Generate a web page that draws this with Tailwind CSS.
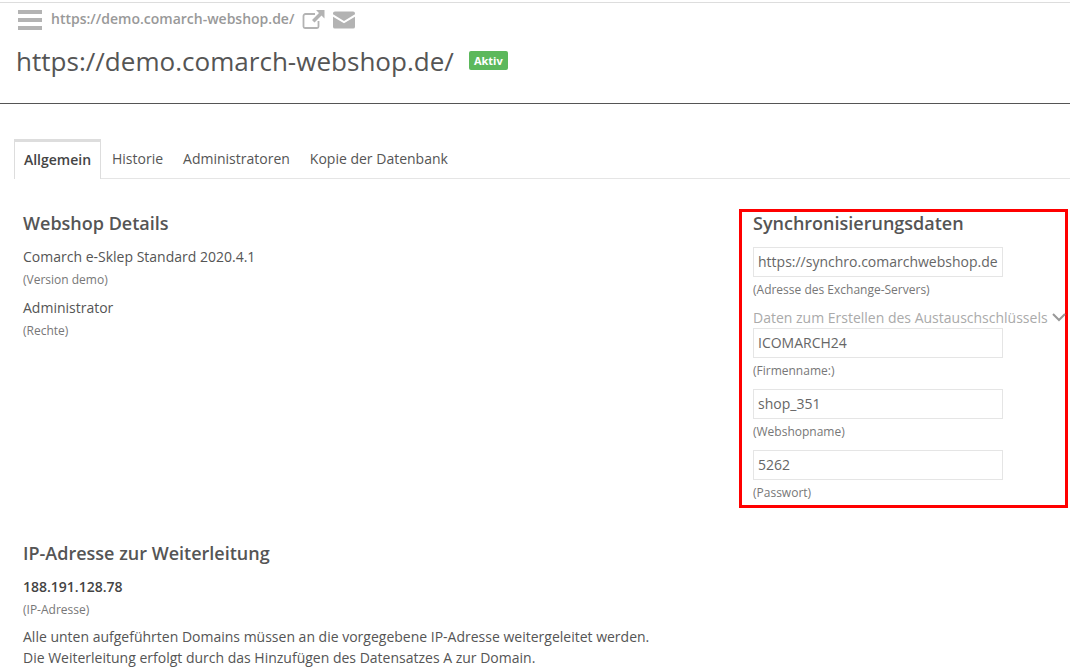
<!DOCTYPE html>
<html lang="de">
<head>
    <meta charset="UTF-8">
    <title>Webshop Details</title>
    <script src="https://cdn.jsdelivr.net/npm/@tailwindcss/browser@4"></script>
</head>
<body class="bg-white h-[671px] overflow-hidden font-['Open_Sans',sans-serif] text-[#555]">
<!-- Top bar -->
<header class="mt-[2px] border-t border-[#ddd] h-[101px] border-b-0">
    <div class="flex items-center h-[34px] pl-[18px]">
        <div class="flex flex-col gap-[4px] w-[24px]">
            <span class="h-[4px] bg-[#b3b3b3]"></span>
            <span class="h-[4px] bg-[#b3b3b3]"></span>
            <span class="h-[4px] bg-[#b3b3b3]"></span>
        </div>
        <a class="ml-[9px] mb-[3px] text-[14px] font-semibold text-[#999]">https://demo.comarch-webshop.de/</a>
        <svg class="ml-[8px] mb-[1px]" width="23" height="19" viewBox="0 0 23 19" fill="none">
            <path d="M13 4H3.500A2 2 0 0 0 1.500 6v10.500a1.500 1.500 0 0 0 1.500 1.500h12a1.500 1.500 0 0 0 1.500-1.500V11" stroke="#b3b3b3" stroke-width="1.800"/>
            <path d="M14 0h8.500v8.500l-3-3-7 7-2.500-2.500 7-7z" fill="#b3b3b3"/>
        </svg>
        <svg class="ml-[8px]" width="22" height="18" viewBox="0 0 23 18">
            <path d="M2 0h19a2 2 0 0 1 2 2v1L11.500 10 0 3V2a2 2 0 0 1 2-2z" fill="#b3b3b3"/>
            <path d="M0 5.500l11.500 7 11.500-7V16a2 2 0 0 1-2 2H2a2 2 0 0 1-2-2z" fill="#b3b3b3"/>
        </svg>
    </div>
    <div class="flex items-center pl-[16px] mt-[6px]">
        <h1 class="text-[26.06px] leading-[36px] text-[#555]">https://demo.comarch-webshop.de/</h1>
        <span class="ml-[15px] mb-[1px] bg-[#5cb85c] text-white text-[11px] leading-[19px] font-bold px-[5px] rounded-[2px]">Aktiv</span>
    </div>
</header>
<div class="h-px bg-[#555]"></div>

<!-- Tabs -->
<nav class="mt-[35px] ml-[14px] flex h-[40px] border-b border-[#e5e5e5] text-[14px]">
    <a class="w-[87px] h-[40px] pb-[3px] bg-white border-x border-[#ddd] border-t-[3px] border-t-[#ddd] flex items-center justify-center font-semibold text-[#444]">Allgemein</a>
    <a class="ml-[11px] h-[39px] flex items-center">Historie</a>
    <a class="ml-[20px] h-[39px] flex items-center">Administratoren</a>
    <a class="ml-[20px] h-[39px] flex items-center">Kopie der Datenbank</a>
</nav>

<main class="flex pl-[23px] mt-[30px]">
    <!-- Webshop Details -->
    <section class="w-[716px] pt-[1px]">
        <h2 class="text-[18px] leading-[26px] font-semibold">Webshop Details</h2>
        <p class="mt-[11px] text-[14px] leading-[20px]">Comarch e-Sklep Standard 2020.4.1</p>
        <p class="mt-[5px] text-[12px] leading-[16px] text-[#777]">(Version demo)</p>
        <p class="mt-[10px] text-[14px] leading-[20px]">Administrator</p>
        <p class="mt-[5px] text-[12px] leading-[16px] text-[#777]">(Rechte)</p>
    </section>

    <!-- Synchronisierungsdaten -->
    <section class="w-[329px] h-[299px] border-[3px] border-[#f00] pl-[11px]">
        <h2 class="-mt-[2px] text-[18px] leading-[26px] font-semibold">Synchronisierungsdaten</h2>
        <input class="block mt-[11px] w-[250px] h-[30px] border border-[#e5e5e5] px-[4px] pb-[2px] text-[14px] text-[#666]" value="https://synchro.comarchwebshop.de">
        <p class="mt-[5px] text-[12px] leading-[16px] text-[#777]">(Adresse des Exchange-Servers)</p>
        <div class="mt-[9px] h-[20px] flex items-center text-[14px] whitespace-nowrap text-[#aaa]">
            Daten zum Erstellen des Austauschschlüssels
            <svg class="ml-[4px] shrink-0" width="14" height="9" viewBox="0 0 14 9" fill="none"><path d="M1 1l6 6 6-6" stroke="#999" stroke-width="2"/></svg>
        </div>
        <input class="block mt-[1px] w-[250px] h-[30px] border border-[#e5e5e5] px-[4px] pb-[2px] text-[14px] text-[#666]" value="ICOMARCH24">
        <p class="mt-[5px] text-[12px] leading-[16px] text-[#777]">(Firmenname:)</p>
        <input class="block mt-[10px] w-[250px] h-[30px] border border-[#e5e5e5] px-[4px] pb-[2px] text-[14px] text-[#666]" value="shop_351">
        <p class="mt-[5px] text-[12px] leading-[16px] text-[#777]">(Webshopname)</p>
        <input class="block mt-[10px] w-[250px] h-[30px] border border-[#e5e5e5] px-[4px] pb-[2px] text-[14px] text-[#666]" value="5262">
        <p class="mt-[5px] text-[12px] leading-[16px] text-[#777]">(Passwort)</p>
    </section>
</main>

<!-- IP-Adresse -->
<section class="pl-[23px] mt-[32px]">
    <h2 class="text-[18px] leading-[26px] font-semibold">IP-Adresse zur Weiterleitung</h2>
    <p class="mt-[11px] text-[14px] leading-[20px] font-semibold text-[#444]">188.191.128.78</p>
    <p class="mt-[5px] text-[12px] leading-[16px] text-[#777]">(IP-Adresse)</p>
    <p class="mt-[8px] text-[14px] leading-[21px]">Alle unten aufgeführten Domains müssen an die vorgegebene IP-Adresse weitergeleitet werden.<br>Die Weiterleitung erfolgt durch das Hinzufügen des Datensatzes A zur Domain.</p>
</section>
</body>
</html>
